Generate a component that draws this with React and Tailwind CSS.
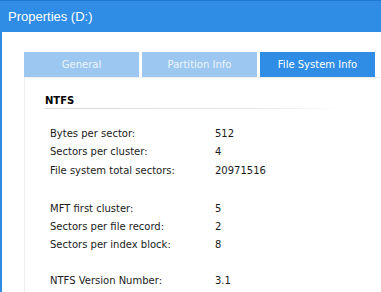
import React from 'react';

const groups = [
    [
        { label: 'Bytes per sector:', value: '512', h: 'h-[17px]' },
        { label: 'Sectors per cluster:', value: '4', h: 'h-[18px]' },
        { label: 'File system total sectors:', value: '20971516', h: 'h-[21px]' },
    ],
    [
        { label: 'MFT first cluster:', value: '5', h: 'h-[18px]' },
        { label: 'Sectors per file record:', value: '2', h: 'h-[18px]' },
        { label: 'Sectors per index block:', value: '8', h: 'h-[18px]' },
    ],
    [
        { label: 'NTFS Version Number:', value: '3.1', h: 'h-[18px]' },
    ],
];

const App = () => {
    return (
        <div className='w-[381px] h-[292px] overflow-hidden bg-white font-["DejaVu_Sans",Verdana,sans-serif] text-[#1b1b1b]'>
            <div className='h-[32px] bg-[#2f8de6] border-t border-[#1f78cf] flex items-center pl-[8px] text-white text-[13px] font-["Liberation_Sans",Arial,sans-serif]'>
                Properties (D:)
            </div>
            <div className='h-[260px] border-l-2 border-[#2f8de6] pl-[22px] pt-[20px]'>
                <div className='flex gap-[3px] h-[25px] text-[10px]'>
                    <div className='w-[115px] flex items-center justify-center bg-[#9cc7f1] text-[#eef5fd]'>General</div>
                    <div className='w-[115px] flex items-center justify-center bg-[#9cc7f1] text-[#eef5fd]'>Partition Info</div>
                    <div className='w-[115px] flex items-center justify-center bg-[#2f8de6] text-white'>File System Info</div>
                </div>
                <div className='h-[300px] border-l border-t border-[#eeeeee] pl-[20px] pt-[15px] text-[10px] leading-[15px]'>
                    <div className='w-[295px] border-b border-transparent [border-image:linear-gradient(to_right,#dcdcdc,#e6e6e6_70%,#ffffff)_1] font-bold text-black'>
                        NTFS
                    </div>
                    <div className='pl-[5px] pt-[16px] flex flex-col gap-[18px]'>
                        {groups.map((rows, i) => (
                            <div key={i} className='flex flex-col'>
                                {rows.map((r) => (
                                    <div key={r.label} className={`${r.h} flex items-center`}>
                                        <span className='w-[165px]'>{r.label}</span>
                                        <span>{r.value}</span>
                                    </div>
                                ))}
                            </div>
                        ))}
                    </div>
                </div>
            </div>
        </div>
    );
};

export default App;
